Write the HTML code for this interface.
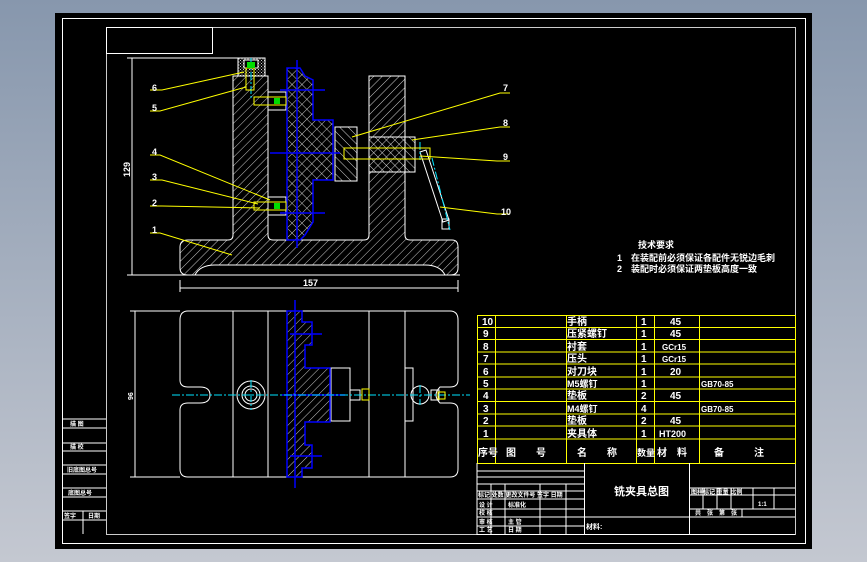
<!DOCTYPE html>
<html><head><meta charset="utf-8"><style>
html,body{margin:0;padding:0;width:867px;height:562px;overflow:hidden;background:linear-gradient(#8797ad,#c4c8d1);}
svg{display:block}
text{font-family:"Liberation Sans","Noto Sans CJK SC",sans-serif;fill:#fff;font-weight:bold}
</style></head><body>
<svg width="867" height="562" viewBox="0 0 867 562" xmlns="http://www.w3.org/2000/svg">
<defs>
<pattern id="h" width="6" height="6" patternUnits="userSpaceOnUse" patternTransform="rotate(45)"><line x1="0" y1="0" x2="0" y2="6" stroke="#fff" stroke-width="0.8"/></pattern>
<pattern id="hb" width="6" height="6" patternUnits="userSpaceOnUse" patternTransform="rotate(-45)"><line x1="0" y1="0" x2="0" y2="6" stroke="#fff" stroke-width="0.8"/></pattern>
<pattern id="x" width="7" height="7" patternUnits="userSpaceOnUse" patternTransform="rotate(45)"><path d="M0 0V7M0 0H7" stroke="#fff" stroke-width="0.8"/></pattern>
<pattern id="d" width="3" height="3" patternUnits="userSpaceOnUse"><rect width="1" height="1" fill="#ccc"/><rect x="1.5" y="1.5" width="1" height="1" fill="#ccc"/></pattern>
</defs>
<rect x="55" y="13" width="757" height="536" fill="#000"/>
<g fill="none" stroke="#fff" stroke-width="1">
<rect x="62.5" y="18.5" width="743" height="525"/>
<rect x="106.5" y="27.5" width="689" height="507" stroke="#ccc"/>
<rect x="106.5" y="27.5" width="106" height="26"/>
<!-- left title block -->
<path d="M62 419H106M62 428H106M62 443H106M62 451H106M62 465H106M62 474H106M62 488H106M62 497H106M62 511H106M62 520H106M83 511V534"/>
<!-- dims front -->
<path d="M127 58H265M132 58V275M127 275H460M180 280V292M458 280V292M180 288H458"/>
<!-- front view body -->
<path d="M233 76H268V235Q268 240 273 240H364Q369 240 369 235V76H405V235Q405 240 410 240H452Q458 240 458 247V268Q458 275 450 275H445Q440 265 425 265H215Q200 265 195 275H188Q180 275 180 268V247Q180 240 188 240H228Q233 240 233 235Z" fill="url(#h)"/>
<rect x="238" y="58" width="27" height="18" fill="url(#d)"/>
<rect x="244" y="60" width="14" height="8" fill="#000"/>
<rect x="335" y="127" width="22" height="54" fill="url(#hb)"/>
<rect x="369" y="137" width="46" height="35" fill="url(#hb)"/>
<rect x="268" y="92" width="18" height="18" fill="#000"/>
<rect x="268" y="197" width="18" height="18" fill="#000"/>
<path d="M420 152L443 222L449 220L426 150Z"/>
<rect x="442" y="219" width="7" height="10"/>
<!-- plan view -->
<path d="M190 311H450Q458 311 458 320V380Q458 387 450 387H440Q432 395 440 403H450Q458 403 458 410V469Q458 477 450 477H188Q180 477 180 469V410Q180 403 188 403H200Q210 403 210 395Q210 387 200 387H188Q180 387 180 380V320Q180 311 188 311Z"/>
<path d="M233 311V477M268 311V477M369 311V477M405 311V477M130 311H180M130 477H180M135 311V477"/>
<circle cx="251" cy="395" r="14"/><circle cx="251" cy="395" r="9"/><circle cx="251" cy="395" r="6"/>
<rect x="331" y="368" width="19" height="53" fill="#000"/>
<path d="M350 390H360V400H350M405 368H413V421H405"/>
<circle cx="420" cy="395" r="9"/>
<rect x="431" y="390" width="8" height="10"/>
</g>
<!-- blue parts -->
<g fill="none" stroke="#0000ff" stroke-width="1.5">
<path d="M287 68H300L305 76L313 80V120H333V180H313V222L305 235L300 240H287Z" fill="url(#x)"/>
<path d="M280 90H325M280 213H325M270 153H340M297 60V248"/>
<path d="M287 311H302V322H312V345H305V368H330V422H305V445H312V468H302V477H287Z" fill="url(#h)"/>
<path d="M295 300V488M282 395H345M290 334H322M290 456H322"/>
</g>
<g stroke="#00e5ff" stroke-width="1" stroke-dasharray="8 2 2 2" fill="none">
<path d="M172 395H470M251 380V410M420 385V405M251 58V98M420 142V160M432 158L450 230"/>
</g>
<g fill="none" stroke="#ffff00" stroke-width="1">
<rect x="246" y="68" width="8" height="22"/>
<rect x="254" y="97" width="32" height="8"/>
<rect x="254" y="202" width="32" height="8"/>
<rect x="344" y="148" width="86" height="11"/>
<rect x="362" y="389" width="7" height="11"/>
<rect x="438" y="392" width="7" height="7"/>
<path d="M150 90H162L244 72M150 111H160L246 87M150 155H160L270 200M150 180H162L258 204M150 206H162L260 208M150 233H160L232 255"/>
<path d="M352 137L500 93H510M412 140L500 127H510M420 156L497 161H510M440 207L497 214H510"/>
</g>
<g fill="#00dd00"><rect x="247" y="62" width="8" height="6"/><rect x="274" y="98" width="6" height="6"/><rect x="274" y="203" width="6" height="6"/></g>
<!-- labels -->
<g font-size="9">
<text x="152" y="91">6</text><text x="152" y="111">5</text><text x="152" y="155">4</text><text x="152" y="180">3</text><text x="152" y="206">2</text><text x="152" y="233">1</text>
<text x="503" y="91">7</text><text x="503" y="126">8</text><text x="503" y="160">9</text><text x="501" y="215">10</text>
<text x="303" y="286">157</text>
<text transform="translate(130,177) rotate(-90)">129</text>
<text transform="translate(133,400) rotate(-90)" font-size="7">96</text>
</g>
<g font-size="9">
<text x="638" y="248">技术要求</text>
<text x="617" y="261">1　在装配前必须保证各配件无锐边毛刺</text>
<text x="617" y="272">2　装配时必须保证两垫板高度一致</text>
</g>
<!-- parts table -->
<g fill="none" stroke="#ffff00" stroke-width="1">
<rect x="477.5" y="315.5" width="318" height="148"/>
<path d="M477 327.5H795M477 339.5H795M477 352H795M477 364H795M477 377H795M477 389H795M477 401.5H795M477 414H795M477 426H795M477 439H795M495.5 315V463M566.5 315V463M636.5 315V463M654.5 315V463M699.5 315V463"/>
</g>
<g font-size="10">
<text x="482" y="325">10</text><text x="567" y="325">手柄</text><text x="641" y="325">1</text><text x="670" y="325">45</text>
<text x="483" y="337">9</text><text x="567" y="337">压紧螺钉</text><text x="641" y="337">1</text><text x="670" y="337">45</text>
<text x="483" y="350">8</text><text x="567" y="350">衬套</text><text x="641" y="350">1</text><text x="662" y="350" font-size="8">GCr15</text>
<text x="483" y="362">7</text><text x="567" y="362">压头</text><text x="641" y="362">1</text><text x="662" y="362" font-size="8">GCr15</text>
<text x="483" y="375">6</text><text x="567" y="375">对刀块</text><text x="641" y="375">1</text><text x="670" y="375">20</text>
<text x="483" y="387">5</text><text x="567" y="387" font-size="9">M5螺钉</text><text x="641" y="387">1</text><text x="701" y="387" font-size="8">GB70-85</text>
<text x="483" y="399">4</text><text x="567" y="399">垫板</text><text x="641" y="399">2</text><text x="670" y="399">45</text>
<text x="483" y="412">3</text><text x="567" y="412" font-size="9">M4螺钉</text><text x="641" y="412">4</text><text x="701" y="412" font-size="8">GB70-85</text>
<text x="483" y="424">2</text><text x="567" y="424">垫板</text><text x="641" y="424">2</text><text x="670" y="424">45</text>
<text x="483" y="437">1</text><text x="567" y="437">夹具体</text><text x="641" y="437">1</text><text x="659" y="437" font-size="9">HT200</text>
<text x="478" y="456">序号</text><text x="506" y="456">图　　号</text><text x="577" y="456">名　　称</text><text x="637" y="456" font-size="9">数量</text><text x="657" y="456">材　料</text><text x="714" y="456">备　　　注</text>
</g>
<!-- title block -->
<g fill="none" stroke="#fff" stroke-width="1">
<path d="M477 463V534.5H795M584.5 463V534M689.5 463V534M477 471H584M477 477H584M477 484H584M477 491H584M477 499H584M477 509H584M477 517H584M477 526H584M491 484V534M505 484V534M540 484V534M566 484V534M689 488H795M689 495H795M689 509H795M584 517H795M703 488V509M717 488V509M731 488V509M753 488V509M774 488V509M742 509V517"/>
</g>
<g font-size="6">
<text x="478" y="497">标记 处数 更改文件号 签字 日期</text>
<text x="479" y="507">设 计</text><text x="508" y="507">标准化</text>
<text x="479" y="515">校 核</text><text x="479" y="524">审 核</text><text x="508" y="524">主 管</text>
<text x="479" y="532">工 艺</text><text x="508" y="532">日 期</text>
<text x="691" y="494">图样标记 重量 比例</text><text x="758" y="506">1:1</text>
<text x="695" y="515">共　张　第　张</text>
<text x="70" y="426">描 图</text><text x="70" y="449">描 校</text><text x="67" y="472">旧底图总号</text><text x="68" y="495">底图总号</text><text x="64" y="518">签字</text><text x="88" y="518">日期</text>
</g>
<text x="614" y="495" font-size="11">铣夹具总图</text>
<text x="586" y="529" font-size="7">材料:</text>
</svg>
</body></html>
